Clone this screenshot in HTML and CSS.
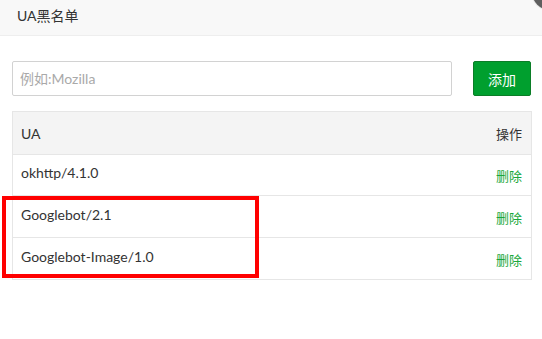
FILE: index.html
```html
<!DOCTYPE html>
<html lang="zh-CN">
<head>
  <meta charset="UTF-8">
  <title>UA黑名单</title>
  <link rel="stylesheet" href="styles.css">
</head>
<body>

  <div class="layer-title">UA黑名单</div>
  <span class="layer-close"></span>

  <div class="layer-content">
    <div class="add-form">
      <input type="text" class="ua-input" placeholder="例如:Mozilla">
      <button class="btn-add">添加</button>
    </div>

    <div class="ua-table">
      <div class="ua-row ua-head">
        <span class="col-ua">UA</span>
        <span class="col-op">操作</span>
      </div>
      <div class="ua-row">
        <span class="col-ua">okhttp/4.1.0</span>
        <a href="#" class="col-op link-del">删除</a>
      </div>
      <div class="ua-row">
        <span class="col-ua">Googlebot/2.1</span>
        <a href="#" class="col-op link-del">删除</a>
      </div>
      <div class="ua-row">
        <span class="col-ua">Googlebot-Image/1.0</span>
        <a href="#" class="col-op link-del">删除</a>
      </div>
    </div>
  </div>

  <div class="highlight"></div>

</body>
</html>
```

FILE: styles.css
```css
body {
  margin: 0;
  font-family: 'Lato', 'Noto Sans CJK SC', sans-serif;
  font-size: 14px;
  color: #333;
  background: #fff;
  overflow: hidden;
}

.layer-title {
  height: 35px;
  line-height: 31px;
  padding-left: 17px;
  background: #f8f8f8;
  border-bottom: 1px solid #eee;
  color: #333;
}

.layer-close {
  position: absolute;
  top: -26px;
  left: 532px;
  width: 36px;
  height: 36px;
  border-radius: 50%;
  background: #5f5f5f;
  box-shadow: 0 0 0 1px #e8e8e8;
}

.layer-content {
  padding: 25px 11px 0 12px;
}

.add-form {
  display: flex;
  gap: 21px;
}

.ua-input {
  width: 441px;
  height: 35px;
  box-sizing: border-box;
  border: 1px solid #d2d2d2;
  border-radius: 2px;
  padding: 0 7px;
  font-family: inherit;
  font-size: 14px;
  color: #333;
}

.ua-input::placeholder {
  color: #a9a9a9;
}

.btn-add {
  width: 58px;
  height: 35px;
  border: 1px solid #0b7d27;
  border-radius: 2px;
  background: #009f2e;
  color: #fff;
  font-family: inherit;
  font-size: 14px;
  cursor: pointer;
}

.ua-table {
  width: 518px;
  margin-top: 15px;
  border: 1px solid #e6e6e6;
  border-bottom: none;
}

.ua-row {
  display: flex;
  justify-content: space-between;
  align-items: center;
  box-sizing: border-box;
  height: 42px;
  padding: 0 9px 0 8px;
  border-bottom: 1px solid #e6e6e6;
}

.ua-head {
  height: 43px;
  background: #f4f4f4;
}

.ua-head + .ua-row {
  height: 41px;
}

.ua-row .col-ua {
  margin-top: -5px;
}

.ua-head .col-ua {
  margin-top: 0;
}

.ua-head .col-op {
  font-size: 13px;
}

.link-del {
  color: #1aa73c;
  text-decoration: none;
  font-size: 13px;
  margin-top: 1px;
}

.highlight {
  position: absolute;
  left: 2px;
  top: 196px;
  width: 249px;
  height: 74px;
  border: 4px solid #ff0000;
}
```
